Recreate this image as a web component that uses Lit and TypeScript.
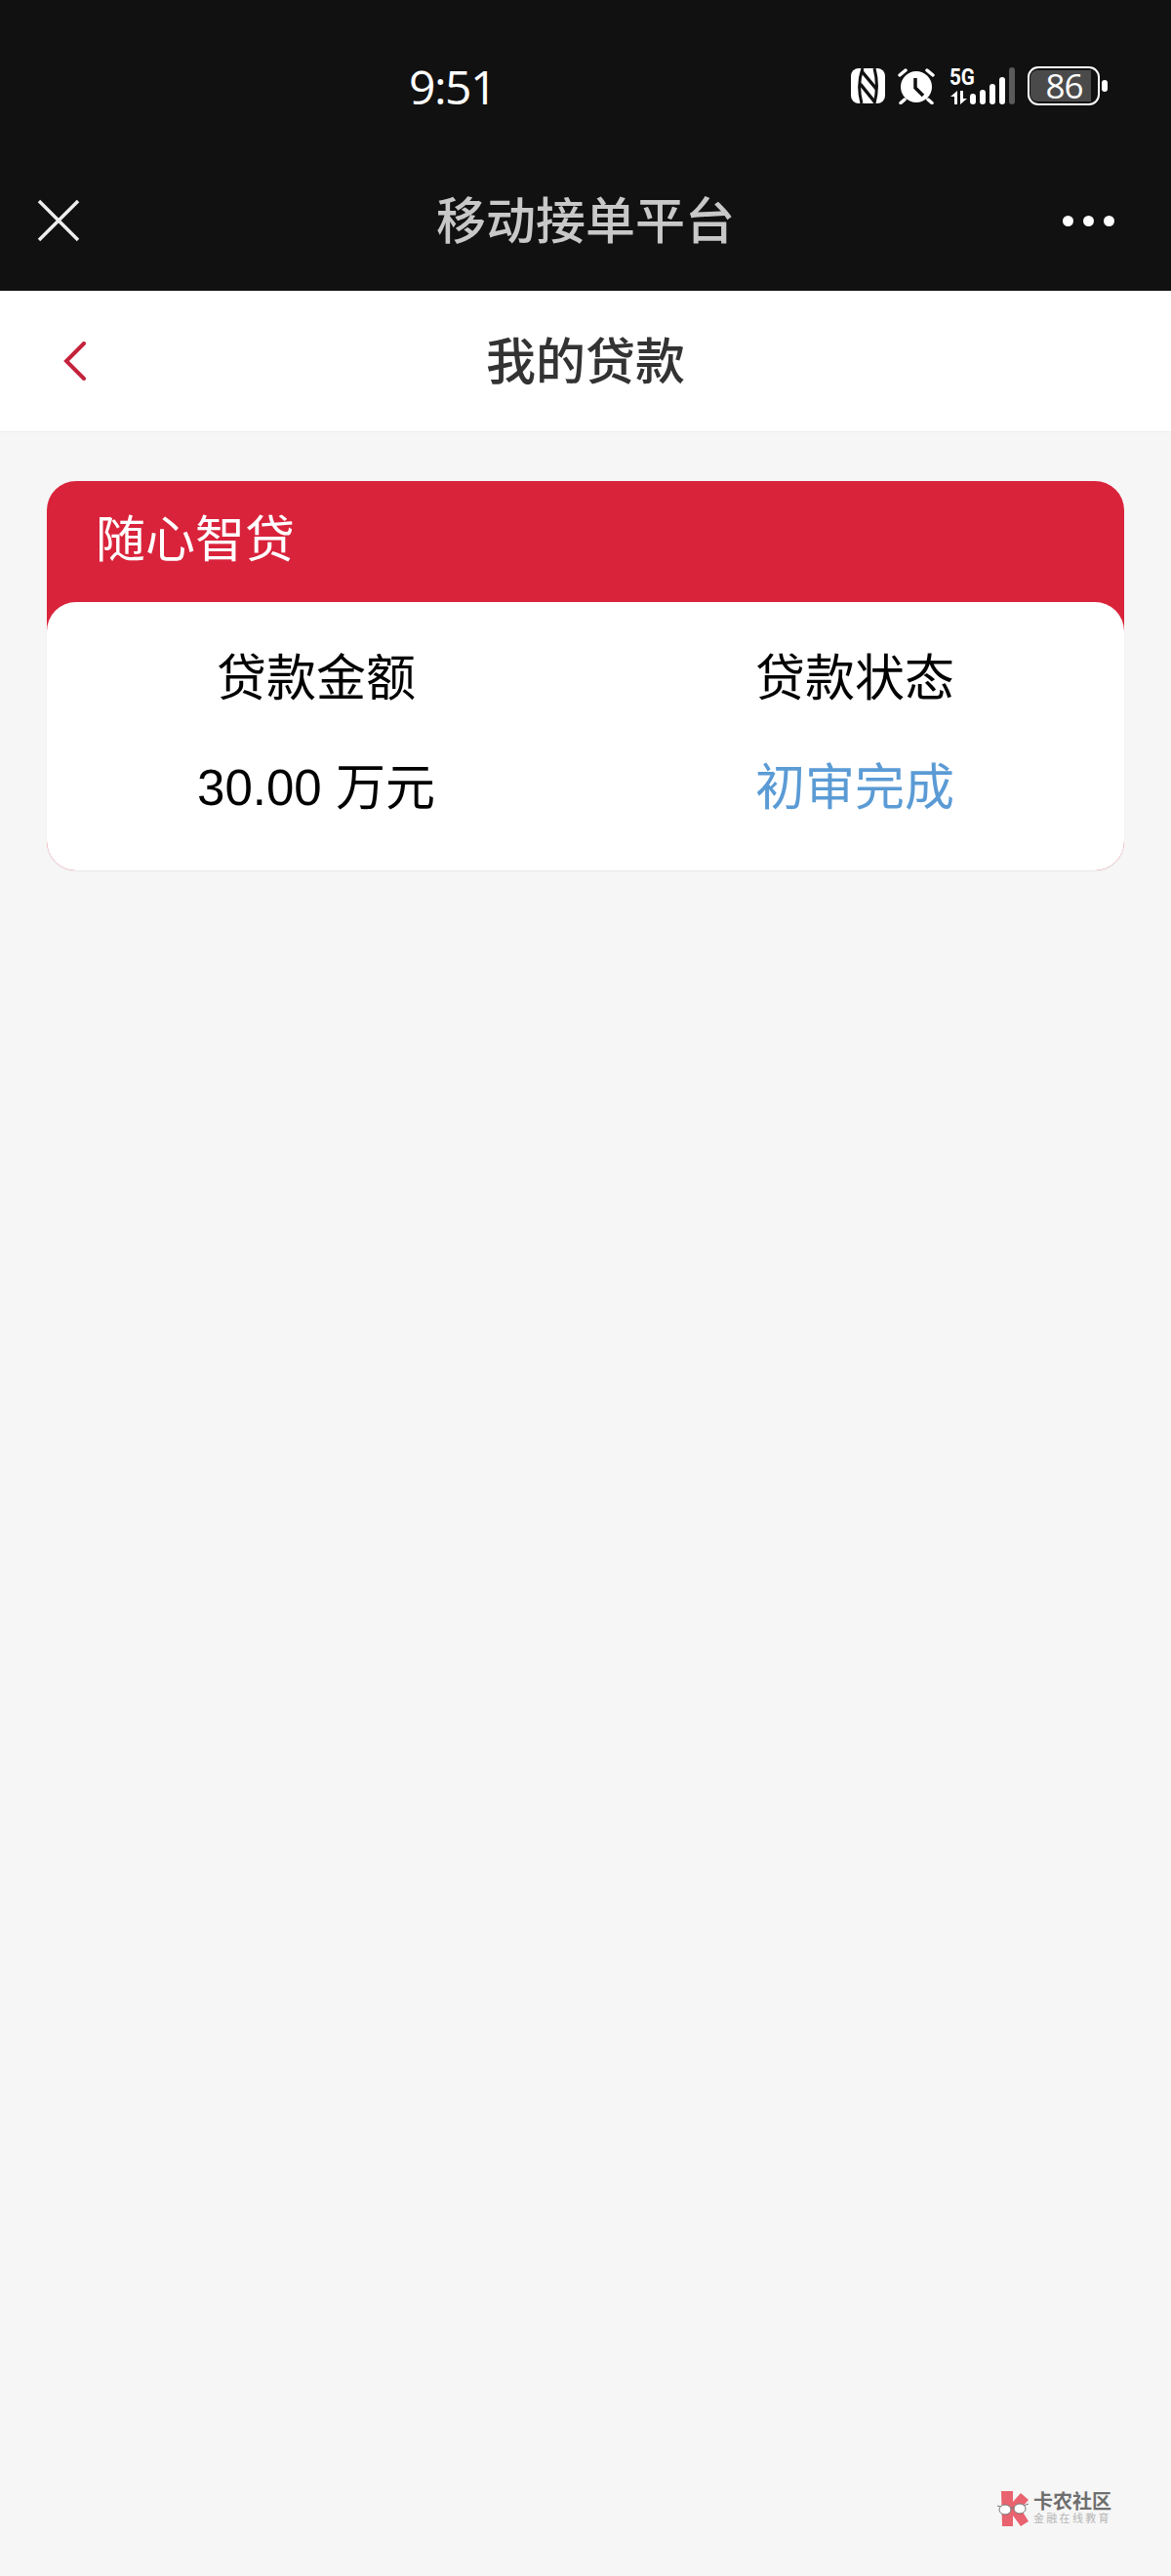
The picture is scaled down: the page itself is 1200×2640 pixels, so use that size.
import { LitElement, html, css, svg } from 'lit';
import { customElement } from 'lit/decorators.js';

const nfcIcon = svg`
  <svg class="ico nfc" width="35" height="36" viewBox="0 0 35 36">
    <rect width="35" height="36" rx="8" fill="#fff"/>
    <path d="M12 0C8 11 8 25 11 36M24 0c3 11 3 25 0 36" stroke="#111" stroke-width="3" fill="none"/>
    <path d="M11 3l15 18M9.500 16 24 34" stroke="#111" stroke-width="3.500" fill="none"/>
  </svg>`;

const alarmIcon = svg`
  <svg class="ico" width="38" height="38" viewBox="0 0 38 38">
    <circle cx="19" cy="20" r="16" fill="#fff"/>
    <path d="M2 8l6-5M36 8l-6-5M7 33l-4 3.500M31 33l4 3.500" stroke="#fff" stroke-width="3.500" stroke-linecap="round" fill="none"/>
    <path d="M18 11v10l8 8" stroke="#111" stroke-width="3.500" fill="none"/>
  </svg>`;

const arrowsIcon = svg`
  <svg class="ico" width="17" height="14" viewBox="0 0 17 14">
    <path fill="#fff" d="M7 0v14H4V6H0zM10 14V0h3v8h4z"/>
  </svg>`;

const logoIcon = svg`
  <svg class="ico" width="32" height="36" viewBox="0 0 32 36">
    <path fill="#e8636f" d="M4 0h12v11l8-9 8 7-8 9 8 13-8 5-8-11v11H5z"/>
    <path d="M0 15l4 1M12 17h7M27 15l5-2" stroke="#777" stroke-width="1" fill="none"/>
    <ellipse cx="8" cy="19" rx="6" ry="5" fill="#fff" stroke="#777" stroke-width="1"/>
    <ellipse cx="23" cy="18" rx="6" ry="5" fill="#fff" stroke="#777" stroke-width="1"/>
  </svg>`;

@customElement('app-root')
export class AppRoot extends LitElement {
  static styles = css`
    :host {
      display: block;
      position: relative;
      min-height: 2640px;
      background: #f6f6f6;
      font-family: "Liberation Sans", "Noto Sans CJK SC", sans-serif;
    }
    .chrome {
      background: #111111;
      height: 298px;
    }
    .status {
      display: flex;
      align-items: flex-start;
      height: 154px;
      padding: 65px 65px 0 419px;
      box-sizing: border-box;
    }
    .time {
      font-family: "Open Sans", "Noto Sans", sans-serif;
      font-size: 48px;
      line-height: 48px;
      letter-spacing: -1.500px;
      color: #fff;
    }
    .status-icons {
      margin-left: auto;
      display: flex;
      align-items: flex-start;
      margin-top: 3px;
    }
    .ico { display: block; }
    .nfc { margin-top: 2px; }
    .alarm { margin-left: 13px; margin-top: 1px; }
    .net {
      margin-left: 15px;
      width: 25px;
      display: flex;
      flex-direction: column;
      margin-top: 1px;
    }
    .net-5g {
      font-family: "Roboto", sans-serif;
      font-weight: 700;
      font-size: 24px;
      line-height: 20px;
      color: #fff;
      white-space: nowrap;
      transform: scaleX(0.86);
      transform-origin: left center;
    }
    .net svg { margin-top: 4px; margin-left: 1px; }
    .bars {
      display: flex;
      align-items: flex-end;
      gap: 4px;
      height: 38px;
      margin: 1px 0 0 -4px;
    }
    .bar {
      width: 6px;
      border-radius: 3px;
      background: #fff;
    }
    .bar.off { background: #5a5a5a; }
    .battery {
      display: flex;
      align-items: center;
      margin-left: 13px;
    }
    .battery-body {
      width: 74px;
      height: 40px;
      box-sizing: border-box;
      border: 2.500px solid #fff;
      border-radius: 11px;
      padding: 2px 7px 2px 1px;
    }
    .battery-fill {
      height: 100%;
      box-sizing: border-box;
      padding-left: 7px;
      border-radius: 7px 0 0 7px;
      background: #4a4a4a;
      text-align: center;
      font-family: "Open Sans", sans-serif;
      font-size: 35px;
      line-height: 31px;
      letter-spacing: -1px;
      color: #fff;
    }
    .battery-tip {
      width: 6px;
      height: 12px;
      margin-left: 2px;
      border-radius: 3px;
      background: #fff;
    }
    .topbar {
      display: grid;
      grid-template-columns: 1fr auto 1fr;
      align-items: center;
      height: 144px;
      padding: 0 58px;
    }
    .close { margin-left: -20px; }
    .title {
      font-size: 51px;
      font-weight: 500;
      color: #c8c8c8;
      padding-bottom: 6px;
    }
    .dots { display: flex; gap: 10px; justify-self: end; }
    .dot {
      width: 11px;
      height: 11px;
      border-radius: 50%;
      background: #fff;
    }
    .nav {
      display: flex;
      align-items: center;
      justify-content: center;
      position: relative;
      height: 145px;
      background: #fff;
      border-bottom: 1px solid #efefef;
      box-sizing: border-box;
    }
    .back {
      position: absolute;
      left: 65px;
      top: 52px;
    }
    .nav-title {
      font-size: 51px;
      font-weight: 500;
      color: #333333;
      padding-bottom: 6px;
    }
    .card {
      margin: 50px 48px 0;
      border-radius: 30px;
      background: #d9233b;
      box-shadow: 0 1px 2px rgba(0, 0, 0, 0.06);
      overflow: hidden;
    }
    .card-head {
      height: 124px;
      box-sizing: border-box;
      padding: 31px 0 0 50px;
      font-size: 51px;
      line-height: 60px;
      color: #fff;
    }
    .card-body {
      display: grid;
      grid-template-columns: 1fr 1fr;
      row-gap: 52px;
      padding: 49px 0 54px;
      background: #fff;
      border-radius: 30px 30px 0 0;
      text-align: center;
      font-size: 51px;
      line-height: 60px;
      color: #000;
    }
    .status-text { color: #5b9bd5; }
    .watermark {
      position: absolute;
      left: 1022px;
      top: 2553px;
      display: flex;
      gap: 5px;
    }
    .wm-text { display: flex; flex-direction: column; padding-top: 1px; }
    .wm-name {
      font-size: 20px;
      line-height: 20px;
      font-weight: 700;
      color: #6e6e6e;
    }
    .wm-sub {
      font-size: 11px;
      line-height: 14px;
      letter-spacing: 2.300px;
      color: #b5b5b5;
      white-space: nowrap;
    }
  `;

  render() {
    return html`
      <div class="chrome">
        <div class="status">
          <div class="time">9:51</div>
          <div class="status-icons">
            ${nfcIcon}
            <div class="alarm">${alarmIcon}</div>
            <div class="net">
              <div class="net-5g">5G</div>
              ${arrowsIcon}
            </div>
            <div class="bars">
              <div class="bar" style="height:11px"></div>
              <div class="bar" style="height:15px"></div>
              <div class="bar" style="height:21px"></div>
              <div class="bar" style="height:28px"></div>
              <div class="bar off" style="height:38px"></div>
            </div>
            <div class="battery">
              <div class="battery-body"><div class="battery-fill">86</div></div>
              <div class="battery-tip"></div>
            </div>
          </div>
        </div>
        <div class="topbar">
          <svg class="ico close" width="44" height="44" viewBox="0 0 44 44">
            <path d="M2 2l40 40M42 2 2 42" stroke="#eeeeee" stroke-width="3.500" fill="none"/>
          </svg>
          <div class="title">移动接单平台</div>
          <div class="dots">
            <div class="dot"></div>
            <div class="dot"></div>
            <div class="dot"></div>
          </div>
        </div>
      </div>
      <div class="nav">
        <svg class="back ico" width="24" height="40" viewBox="0 0 24 40">
          <path d="M21 2 3 20l18 18" stroke="#c4223c" stroke-width="4" stroke-linecap="round" fill="none"/>
        </svg>
        <div class="nav-title">我的贷款</div>
      </div>
      <div class="card">
        <div class="card-head">随心智贷</div>
        <div class="card-body">
          <div>贷款金额</div>
          <div>贷款状态</div>
          <div>30.00 万元</div>
          <div class="status-text">初审完成</div>
        </div>
      </div>
      <div class="watermark">
        ${logoIcon}
        <div class="wm-text">
          <div class="wm-name">卡农社区</div>
          <div class="wm-sub">金融在线教育</div>
        </div>
      </div>
    `;
  }
}
